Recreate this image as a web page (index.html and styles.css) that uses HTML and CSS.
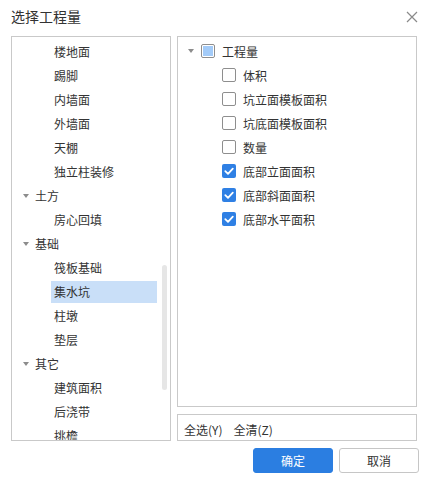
FILE: index.html
```html
<!DOCTYPE html>
<html>
<head>
<meta charset="utf-8">
<link rel="stylesheet" href="styles.css">
</head>
<body>
<div class="dialog">
  <div class="header">
    <span class="title">选择工程量</span>
    <svg class="close" width="12" height="12" viewBox="0 0 12 12"><path d="M1 1L11 11M11 1L1 11" stroke="#8a8a8a" stroke-width="1.2" fill="none"/></svg>
  </div>
  <div class="content">
    <div class="left-panel">
      <div class="ltree">
        <div class="lrow child"><span class="lbl">楼地面</span></div>
        <div class="lrow child"><span class="lbl">踢脚</span></div>
        <div class="lrow child"><span class="lbl">内墙面</span></div>
        <div class="lrow child"><span class="lbl">外墙面</span></div>
        <div class="lrow child"><span class="lbl">天棚</span></div>
        <div class="lrow child"><span class="lbl">独立柱装修</span></div>
        <div class="lrow parent"><span class="arrow"></span><span class="lbl">土方</span></div>
        <div class="lrow child"><span class="lbl">房心回填</span></div>
        <div class="lrow parent"><span class="arrow"></span><span class="lbl">基础</span></div>
        <div class="lrow child"><span class="lbl">筏板基础</span></div>
        <div class="lrow child"><span class="lbl sel">集水坑</span></div>
        <div class="lrow child"><span class="lbl">柱墩</span></div>
        <div class="lrow child"><span class="lbl">垫层</span></div>
        <div class="lrow parent"><span class="arrow"></span><span class="lbl">其它</span></div>
        <div class="lrow child"><span class="lbl">建筑面积</span></div>
        <div class="lrow child"><span class="lbl">后浇带</span></div>
        <div class="lrow child"><span class="lbl">挑檐</span></div>
      </div>
      <div class="scroll-thumb"></div>
    </div>
    <div class="right-col">
      <div class="right-panel">
        <div class="rrow root"><span class="arrow"></span><span class="cb partial"><span class="fill"></span></span><span class="lbl">工程量</span></div>
        <div class="rrow sub"><span class="cb"></span><span class="lbl">体积</span></div>
        <div class="rrow sub"><span class="cb"></span><span class="lbl">坑立面模板面积</span></div>
        <div class="rrow sub"><span class="cb"></span><span class="lbl">坑底面模板面积</span></div>
        <div class="rrow sub"><span class="cb"></span><span class="lbl">数量</span></div>
        <div class="rrow sub"><span class="cb checked"><svg width="14" height="14" viewBox="0 0 14 14"><path d="M3.3 7.2L6 9.8L10.8 4.6" stroke="#fff" stroke-width="1.8" fill="none" stroke-linecap="round" stroke-linejoin="round"/></svg></span><span class="lbl">底部立面面积</span></div>
        <div class="rrow sub"><span class="cb checked"><svg width="14" height="14" viewBox="0 0 14 14"><path d="M3.3 7.2L6 9.8L10.8 4.6" stroke="#fff" stroke-width="1.8" fill="none" stroke-linecap="round" stroke-linejoin="round"/></svg></span><span class="lbl">底部斜面面积</span></div>
        <div class="rrow sub"><span class="cb checked"><svg width="14" height="14" viewBox="0 0 14 14"><path d="M3.3 7.2L6 9.8L10.8 4.6" stroke="#fff" stroke-width="1.8" fill="none" stroke-linecap="round" stroke-linejoin="round"/></svg></span><span class="lbl">底部水平面积</span></div>
      </div>
      <div class="toolbar">
        <span class="tool">全选(Y)</span>
        <span class="tool">全清(Z)</span>
      </div>
    </div>
  </div>
  <div class="footer">
    <button class="btn primary">确定</button>
    <button class="btn">取消</button>
  </div>
</div>
</body>
</html>
```

FILE: styles.css
```css
* { box-sizing: border-box; }
html, body { margin: 0; padding: 0; background: #fff; }
body {
  font-family: "Noto Sans CJK SC", "Liberation Sans", sans-serif;
  font-size: 12px;
  color: #333;
}
.dialog {
  width: 427px;
  height: 482px;
  padding: 0 8px 0 11px;
  display: flex;
  flex-direction: column;
}
.header {
  height: 36px;
  display: flex;
  align-items: center;
  justify-content: space-between;
  padding-bottom: 4px;
}
.title {
  font-size: 14px;
  color: #333;
}
.close { margin-right: 1px; margin-top: 1px; }
.content {
  display: flex;
  gap: 6px;
  height: 405px;
}
.left-panel {
  position: relative;
  width: 160px;
  height: 405px;
  border: 1px solid #c9c9c9;
  overflow: hidden;
}
.ltree { padding-top: 3px; }
.lrow {
  height: 24px;
  display: flex;
  align-items: center;
  line-height: 22px;
  white-space: nowrap;
}
.lrow.parent { padding-left: 11px; }
.lrow.parent .lbl { margin-left: 6px; }
.lrow.child { padding-left: 39px; }
.lrow.child .lbl { padding-left: 3px; height: 22px; }
.lbl.sel { background: #c9dff8; width: 106px; }
.arrow {
  width: 0;
  height: 0;
  border-left: 3.5px solid transparent;
  border-right: 3.5px solid transparent;
  border-top: 4px solid #8c8c8c;
}
.scroll-thumb {
  position: absolute;
  left: 150px;
  top: 228px;
  width: 5px;
  height: 125px;
  border-radius: 3px;
  background: #e6e6e6;
}
.right-col {
  width: 240px;
  display: flex;
  flex-direction: column;
  gap: 7px;
}
.right-panel {
  height: 371px;
  border: 1px solid #c9c9c9;
  padding-top: 2px;
}
.rrow {
  height: 24px;
  display: flex;
  align-items: center;
  white-space: nowrap;
}
.rrow.root { padding-left: 10px; }
.rrow.root .arrow { margin-right: 7px; }
.rrow.sub { padding-left: 44px; }
.cb {
  width: 14px;
  height: 14px;
  border: 1px solid #8e8e8e;
  border-radius: 2px;
  background: #fff;
  margin-right: 7px;
  display: flex;
  align-items: center;
  justify-content: center;
  flex: none;
}
.cb.partial { padding: 1px; }
.cb.partial .fill {
  display: block;
  width: 100%;
  height: 100%;
  background: #a3cbf8;
}
.cb.checked {
  border: none;
  background: #2f80e4;
}
.toolbar {
  height: 27px;
  border: 1px solid #c9c9c9;
  display: flex;
  align-items: center;
  padding: 3px 0 0 6px;
  gap: 11px;
}
.footer {
  display: flex;
  justify-content: flex-end;
  gap: 6px;
  margin-top: 7px;
}
.btn {
  width: 80px;
  height: 25px;
  border-radius: 3px;
  border: 1px solid #c6c6c6;
  background: #fff;
  color: #333;
  font-family: "Noto Sans CJK SC", "Liberation Sans", sans-serif;
  font-size: 12px;
  padding: 0;
}
.btn.primary {
  background: #2b7ee1;
  border-color: #2b7ee1;
  color: #fff;
}
```
